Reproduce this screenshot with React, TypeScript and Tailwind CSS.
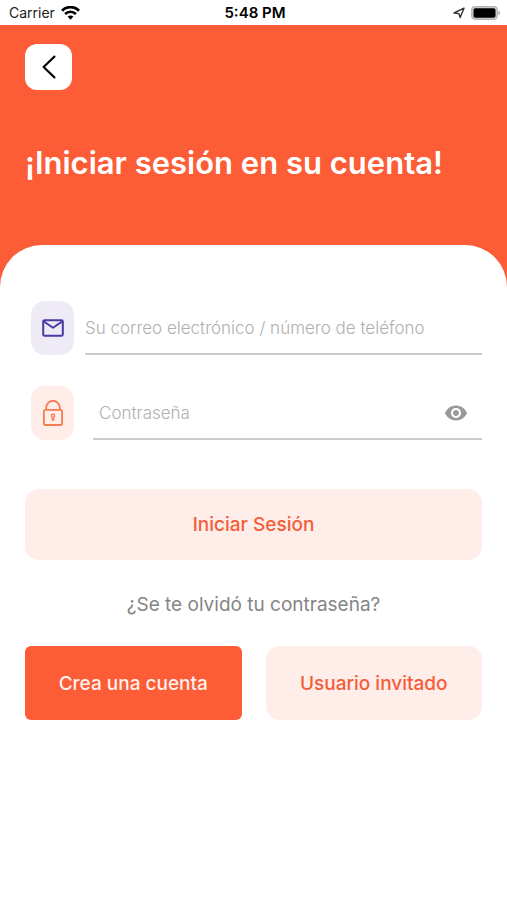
import { useState } from "react";

function StatusBar() {
  return (
    <div className="grid h-[25px] grid-cols-3 items-center bg-white pr-[6px] pl-[9px] text-black">
      <div className="flex items-center gap-[6px]">
        <span className="text-sm leading-5 text-[#222]">Carrier</span>
        <svg width="19" height="14" viewBox="0 0 19 14" fill="none" stroke="currentColor" aria-hidden="true">
          <path d="M1 4.8C5.8-.1 13.2-.1 18 4.8" strokeWidth="2.8" />
          <path d="M4.1 8c3.1-3 7.7-3 10.8 0" strokeWidth="2.6" />
          <path d="M9.5 13.7 6.6 10.6c1.6-1.5 4.2-1.5 5.8 0Z" fill="currentColor" stroke="none" />
        </svg>
      </div>
      <span className="text-center text-[15px] leading-5 font-semibold">5:48 PM</span>
      <div className="flex items-center justify-end gap-[6px]">
        <svg width="12" height="12" viewBox="0 0 12 12" fill="none" stroke="#333" strokeWidth="1.4" strokeLinejoin="round" aria-hidden="true">
          <path d="M11 1.2 1 6l4.8.6 1.4 4Z" />
        </svg>
        <svg width="30" height="14" viewBox="0 0 30 14" aria-hidden="true">
          <rect x=".7" y=".7" width="25.6" height="12.6" rx="3.5" fill="#d0d0d0" stroke="#b4b4b4" strokeWidth="1.2" />
          <rect x="2.5" y="2.3" width="22" height="9.4" rx="1.8" fill="#000" />
          <path d="M27.4 4.6c2.4.8 2.4 4 0 4.8Z" fill="#b4b4b4" />
        </svg>
      </div>
    </div>
  );
}

export default function App() {
  const [visible, setVisible] = useState(false);

  return (
    <div className="flex min-h-screen flex-col bg-white font-['Inter','Liberation_Sans',sans-serif]">
      <StatusBar />
      <div className="flex grow flex-col bg-[#fc5c36]">
        <header className="px-[25px] pt-[19px] pb-[62px]">
          <button type="button" aria-label="Volver" className="flex h-[46px] w-[47px] items-center justify-center rounded-xl bg-white">
            <svg width="14" height="24" viewBox="0 0 14 24" fill="none" stroke="#0a0a0a" strokeWidth="2.2" strokeLinecap="round" strokeLinejoin="round" aria-hidden="true">
              <path d="M12.4 1.6 1.6 12l10.8 10.4" />
            </svg>
          </button>
          <h1 className="mt-[53px] text-[31px] leading-10 font-semibold text-white">¡Iniciar sesión en su cuenta!</h1>
        </header>

        <main className="grow rounded-t-[42px] bg-white px-[25px] pt-[56px] pb-8">
          <form onSubmit={(e) => e.preventDefault()}>
            <div className="ml-[6px] flex gap-[11px]">
              <label htmlFor="user" aria-label="Correo electrónico o teléfono" className="flex h-[54px] w-[43px] shrink-0 items-center justify-center rounded-[14px] bg-[#eeebf7]">
                <svg width="22" height="18" viewBox="0 0 22 18" fill="none" stroke="#4a3aa0" strokeWidth="2" strokeLinejoin="round" aria-hidden="true">
                  <rect x="1.2" y="1.2" width="19.6" height="15.6" rx="1.4" />
                  <path d="M1.5 2.2 11 8.8l9.5-6.6" />
                </svg>
              </label>
              <input
                id="user"
                type="text"
                placeholder="Su correo electrónico / número de teléfono"
                className="h-[54px] min-w-0 grow border-b-2 border-[#cbcbcb] pt-[2px] text-[17px] font-light text-gray-700 outline-none placeholder:text-[#b0b0b0]"
              />
            </div>

            <div className="mt-[31px] ml-[6px] flex gap-[19px]">
              <label htmlFor="password" aria-label="Contraseña" className="flex h-[54px] w-[43px] shrink-0 items-center justify-center rounded-[14px] bg-[#ffedea]">
                <svg width="20" height="26" viewBox="0 0 20 26" fill="none" stroke="#f47c52" strokeWidth="1.8" aria-hidden="true">
                  <rect x=".9" y="9.8" width="18.2" height="15.2" rx="1.6" />
                  <path d="M3.2 9.6V7.6a6.8 6.8 0 0 1 13.6 0v2" />
                  <circle cx="10" cy="15.8" r="1.6" strokeWidth="1.4" />
                  <path d="M9.2 17.4v2.8h1.6v-2.8" strokeWidth="1.2" />
                </svg>
              </label>
              <div className="flex h-[54px] min-w-0 grow items-center border-b-2 border-[#cbcbcb] pt-[2px] pr-[15px] pl-[6px]">
                <input
                  id="password"
                  type={visible ? "text" : "password"}
                  placeholder="Contraseña"
                  className="h-full min-w-0 grow text-[17px] font-light text-gray-700 outline-none placeholder:text-[#b0b0b0]"
                />
                <button type="button" aria-label="Mostrar contraseña" aria-pressed={visible} onClick={() => setVisible(!visible)}>
                  <svg width="22" height="16" viewBox="1 4.5 22 15" fill="#999" aria-hidden="true">
                    <path d="M12 4.5C7 4.5 2.73 7.61 1 12c1.73 4.39 6 7.5 11 7.5s9.27-3.11 11-7.5c-1.73-4.39-6-7.5-11-7.5zM12 17c-2.76 0-5-2.24-5-5s2.24-5 5-5 5 2.24 5 5-2.24 5-5 5zm0-8c-1.66 0-3 1.34-3 3s1.34 3 3 3 3-1.34 3-3-1.34-3-3-3z" />
                  </svg>
                </button>
              </div>
            </div>

            <button type="submit" className="mt-[49px] h-[71px] w-full rounded-[14px] bg-[#ffedea] pt-[2px] text-[19px] font-medium text-[#f45d38]">
              Iniciar Sesión
            </button>
          </form>

          <div className="mt-[29px] text-center">
            <a href="#recuperar" className="inline-block text-[19px] leading-8 text-[#858585]">¿Se te olvidó tu contraseña?</a>
          </div>

          <div className="mt-[25px] grid grid-cols-2 gap-6">
            <button type="button" className="h-[74px] rounded-md bg-[#fc5c36] pt-[2px] text-[19px] font-medium text-[#fff1ec]">
              Crea una cuenta
            </button>
            <button type="button" className="h-[74px] rounded-[14px] bg-[#ffedea] pt-[2px] text-[19px] font-medium text-[#f45d38]">
              Usuario invitado
            </button>
          </div>
        </main>
      </div>
    </div>
  );
}
